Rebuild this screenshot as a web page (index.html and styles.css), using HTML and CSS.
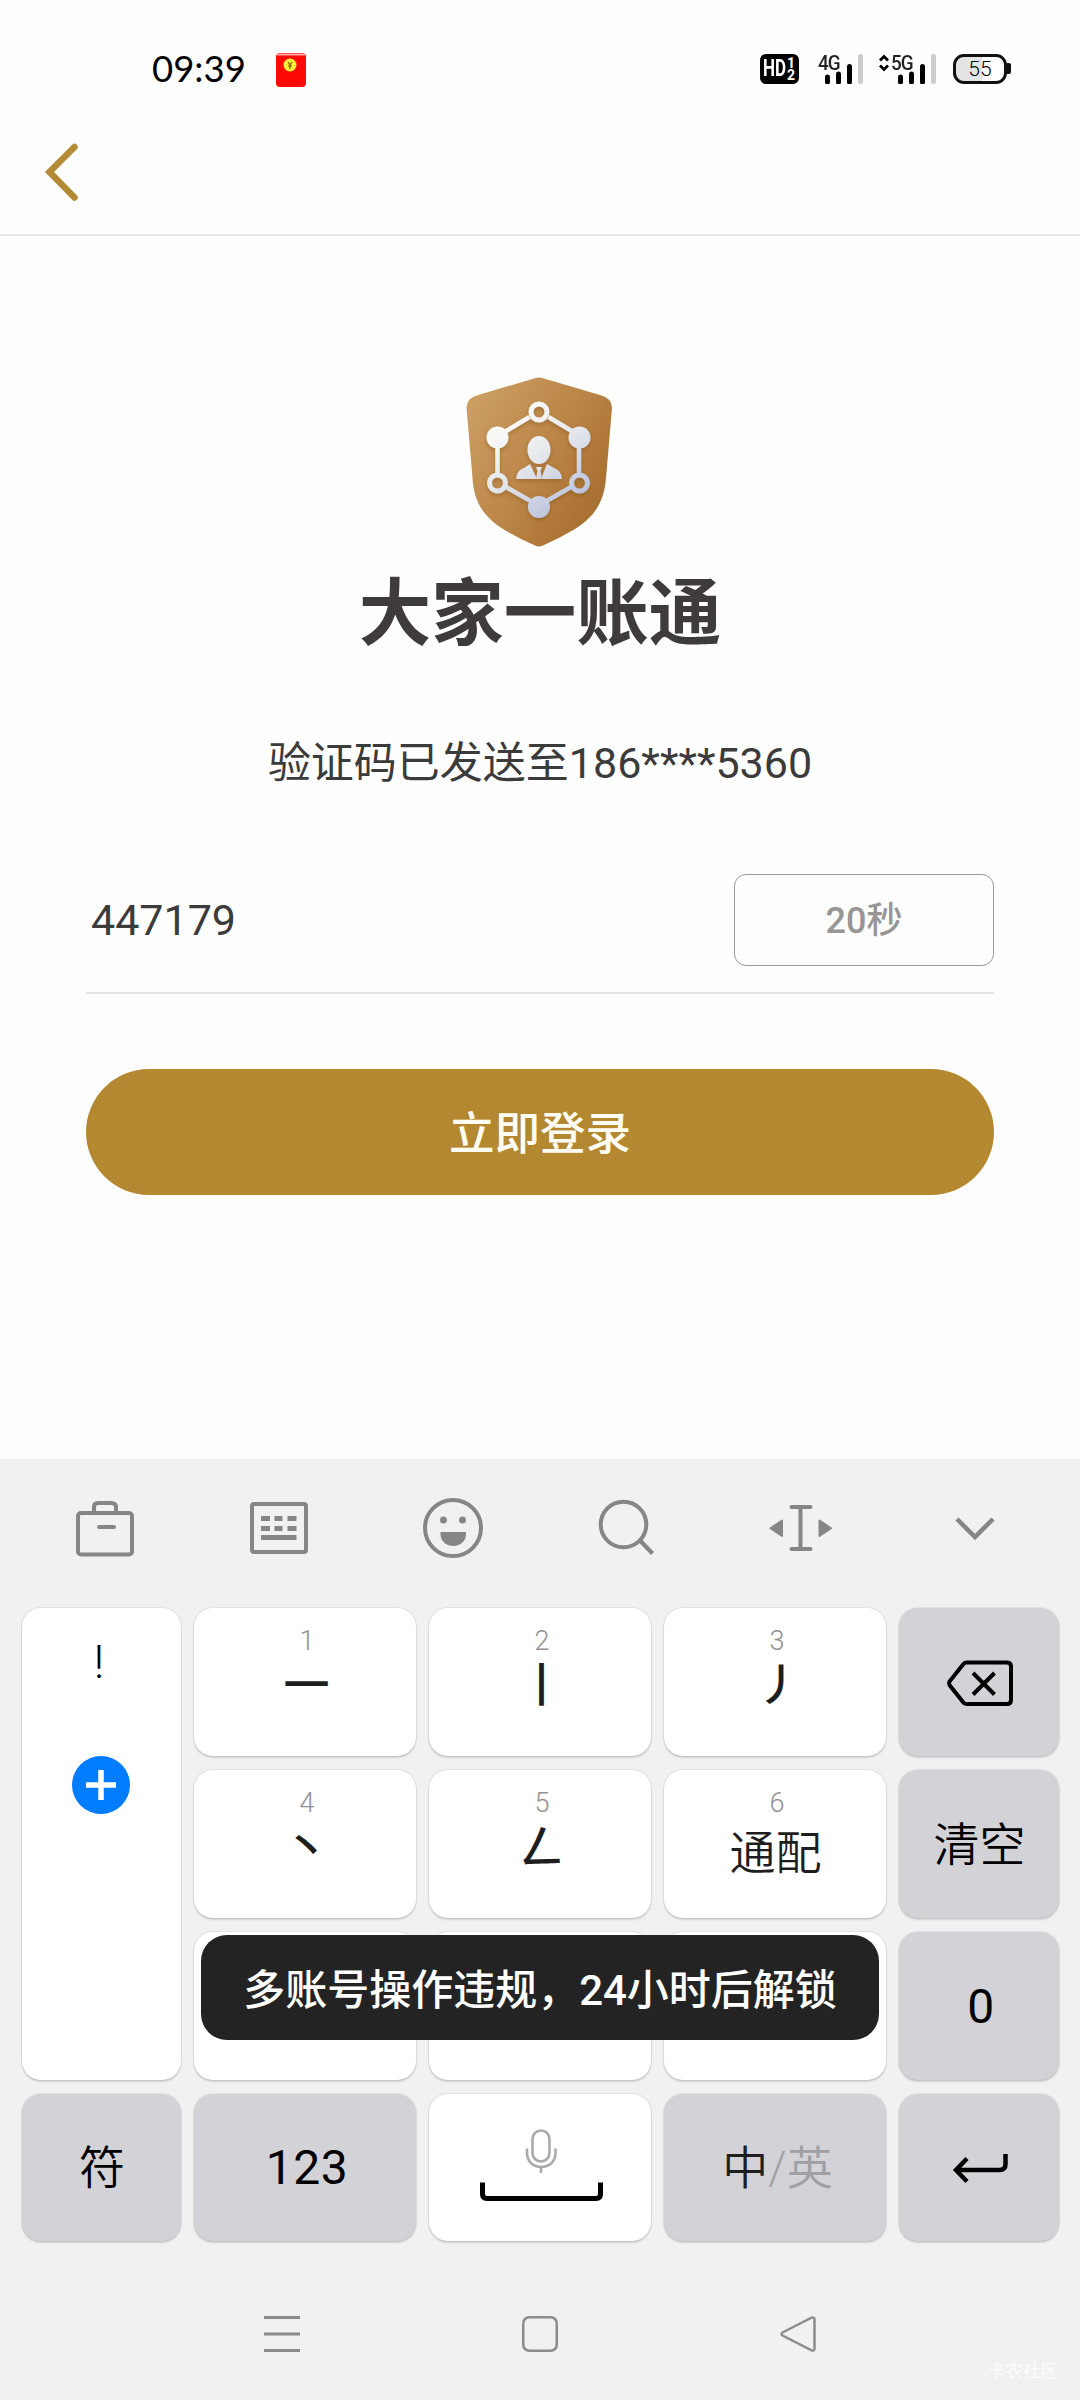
FILE: index.html
```html
<!DOCTYPE html>
<html lang="zh-CN">
<head>
<meta charset="utf-8">
<title>大家一账通</title>
<link rel="stylesheet" href="styles.css">
</head>
<body>
<div class="screen">
  <header class="status">
    <span class="clock">09:39</span>
    <svg class="packet" width="32" height="36" viewBox="0 0 32 36">
      <rect x="1" y="1" width="30" height="34" rx="4" fill="#fb0a06"/>
      <path d="M2 2.500H30" stroke="#f9a6a0" stroke-width="2"/>
      <circle cx="15" cy="13" r="6.500" fill="#fdf03a"/>
      <path d="M13 10l2 3 2-3M15 13v4M13 14h4" stroke="#7c5a00" stroke-width="1.200" fill="none"/>
    </svg>
    <div class="indicators">
      <div class="hd"><span class="hd-main">HD</span><span class="hd-sub"><i>1</i><i>2</i></span></div>
      <div class="signal s4">
        <span class="net">4G</span>
        <svg width="40" height="30" viewBox="0 0 40 30"><path d="M4.500 23v5M15.500 20v8M26.500 12.500v15.500" stroke="#000" stroke-width="5" stroke-linecap="round"/><path d="M37.500 2.500v25" stroke="#ccc" stroke-width="5" stroke-linecap="round"/></svg>
      </div>
      <svg class="updown" width="12" height="18" viewBox="0 0 12 18"><path d="M2 6.500l4-4 4 4M2 11.500l4 4 4-4" fill="none" stroke="#000" stroke-width="2.800"/></svg>
      <div class="signal s5">
        <span class="net">5G</span>
        <svg width="40" height="30" viewBox="0 0 40 30"><path d="M4.500 23v5M15.500 20v8M26.500 12.500v15.500" stroke="#000" stroke-width="5" stroke-linecap="round"/><path d="M37.500 2.500v25" stroke="#ccc" stroke-width="5" stroke-linecap="round"/></svg>
      </div>
      <div class="battery"><span>55</span></div><div class="nub"></div>
    </div>
  </header>
  <nav class="topbar">
    <svg width="36" height="64" viewBox="0 0 36 64"><path d="M31.500 7L6.500 32L31.500 57.500" fill="none" stroke="#b38a35" stroke-width="6.500" stroke-linecap="round" stroke-linejoin="miter"/></svg>
  </nav>
  <main class="login">
    <svg class="shield" width="146" height="170" viewBox="0 0 146 170">
      <defs>
        <linearGradient id="gold" x1="0" y1="0.150" x2="1" y2="0.850"><stop offset="0" stop-color="#cc9f63"/><stop offset="0.450" stop-color="#bd884a"/><stop offset="1" stop-color="#a36b2b"/></linearGradient>
        <linearGradient id="silver" gradientUnits="userSpaceOnUse" x1="25" y1="40" x2="95" y2="140"><stop offset="0" stop-color="#fffefa"/><stop offset="0.450" stop-color="#e8eaed"/><stop offset="1" stop-color="#b7c0db"/></linearGradient>
        <filter id="soft" x="-20%" y="-20%" width="140%" height="140%"><feDropShadow dx="0" dy="2" stdDeviation="2" flood-color="#7a4a12" flood-opacity="0.450"/></filter>
      </defs>
      <path d="M68 1.500Q73 -0.500 78 1.500L134 18Q146 21 146 31L140 101C138 130 123 143 109 152Q94 161 77 168.500Q73 170.500 69 168.500Q52 161 37 152C23 143 8 130 6.500 101L0.500 31Q0.500 21 12 18Z" fill="url(#gold)"/>
      <g filter="url(#soft)" stroke="url(#silver)" fill="none">
        <path d="M63.500 40L32 59M82.500 40L114 59M31.500 60.500V96M113 60.500V96M40 110L68 126M105 110L77 126" stroke-width="4.500"/>
        <circle cx="73" cy="35" r="8" stroke-width="5"/>
        <circle cx="31.500" cy="106" r="8" stroke-width="5"/>
        <circle cx="113.500" cy="106" r="8" stroke-width="5"/>
        <g fill="url(#silver)" stroke="none">
          <circle cx="31.500" cy="60.500" r="11"/><circle cx="113.500" cy="60.500" r="11"/><circle cx="73" cy="130" r="11"/>
          <ellipse cx="73" cy="73" rx="11.500" ry="14"/>
          <path d="M50 102Q51 93 58 91L64 87L71 102ZM96 102Q95 93 88 91L81 87L75 102ZM70 90h6l-1.500 4 1.500 8h-6l1.500-8z"/>
        </g>
      </g>
    </svg>
    <h1>大家一账通</h1>
    <p class="sent">验证码已发送至186****5360</p>
    <div class="code-row">
      <span class="code">447179</span>
      <button class="countdown">20秒</button>
    </div>
    <button class="submit">立即登录</button>
  </main>
  <section class="keyboard">
    <div class="tools">
      <svg width="64" height="64" viewBox="0 0 64 64"><g fill="none" stroke="#868686" stroke-width="4"><rect x="5" y="17" width="54" height="41.500" rx="3"/><path d="M21 17V11Q21 7 25 7H38Q43 7 43 11V17"/><path d="M26 31h15" stroke-linecap="round"/></g></svg>
      <svg width="64" height="64" viewBox="0 0 64 64"><rect x="5" y="8" width="54" height="48" rx="2" fill="none" stroke="#868686" stroke-width="4"/><path d="M14 22.500h9m4.500 0h8m5 0h9M14 32.500h9m4.500 0h8m5 0h9M14 41.500h35.500" stroke="#868686" stroke-width="5"/></svg>
      <svg width="64" height="64" viewBox="0 0 64 64"><circle cx="32" cy="32" r="28" fill="none" stroke="#868686" stroke-width="4"/><g fill="#868686"><circle cx="22.500" cy="24" r="3.500"/><circle cx="41.500" cy="24" r="3.500"/><path d="M19.500 36h25.500v2c0 16-25.500 16-25.500 0z"/></g></svg>
      <svg width="64" height="64" viewBox="0 0 64 64"><path d="M45 44.500L57.500 57.500" stroke="#868686" stroke-width="4.200"/><circle cx="28.500" cy="28.500" r="22.800" fill="none" stroke="#868686" stroke-width="4"/></svg>
      <svg width="64" height="64" viewBox="0 0 64 64"><path d="M32 11v42M23 11h19M23 53h19" transform="translate(-0.500 0)" stroke="#868686" stroke-width="4" stroke-linecap="round"/><path d="M13 24.500V40L1.500 32.250ZM50.500 24.500V40L62 32.250Z" fill="#868686" stroke="#868686" stroke-width="2" stroke-linejoin="round"/></svg>
      <svg width="64" height="64" viewBox="0 0 64 64"><path d="M14 23L32 41L50 23" fill="none" stroke="#868686" stroke-width="4.500"/></svg>
    </div>
    <div class="keys">
      <div class="key side">
        <span class="bang">!</span>
        <svg width="58" height="58" viewBox="0 0 58 58"><circle cx="29" cy="29" r="29" fill="#007cff"/><path d="M14 29h30M29 14v30" stroke="#fff" stroke-width="5.500"/></svg>
      </div>
      <div class="key"><small>1</small><b>一</b></div>
      <div class="key"><small>2</small><b>丨</b></div>
      <div class="key"><small>3</small><b class="sweep">㇓</b></div>
      <div class="key gray"><svg class="erase" width="70" height="50" viewBox="0 0 70 50"><g fill="none" stroke="#000" stroke-width="4"><path d="M21.500 4.500H62Q66 4.500 66 8.500V42Q66 46 62 46H21.500Q19.500 46 18 44L4.500 27Q3.500 25.300 4.500 23.500L18 6.500Q19.500 4.500 21.500 4.500Z"/><path d="M28 15L49.500 36.500M49.500 15L28 36.500"/></g></svg></div>
      <div class="key"><small>4</small><b>丶</b></div>
      <div class="key"><small>5</small><b>ㄥ</b></div>
      <div class="key"><small>6</small><b class="word">通配</b></div>
      <div class="key gray"><span>清空</span></div>
      <div class="key"></div>
      <div class="key"></div>
      <div class="key"></div>
      <div class="key gray num">0</div>
      <div class="key gray"><span>符</span></div>
      <div class="key gray num">123</div>
      <div class="key">
        <svg class="space" width="126" height="80" viewBox="0 0 126 80"><g fill="none" stroke="#aaa" stroke-width="2.600"><rect x="54.500" y="4.500" width="17" height="31" rx="8.500"/><path d="M49 22.500V27C49 45.500 77.500 45.500 77.500 27V22.500M63 41v6"/></g><path d="M4.500 56.500V68Q4.500 72.500 9 72.500H118Q122.500 72.500 122.500 68V56.500" fill="none" stroke="#000" stroke-width="5"/></svg>
      </div>
      <div class="key gray lang"><span>中<i>/英</i></span></div>
      <div class="key gray"><svg class="enter" width="60" height="36" viewBox="0 0 60 36"><path d="M55.500 3V13Q55.500 19 49.500 19H7M17 7.500L6 19L17 30.500" fill="none" stroke="#000" stroke-width="4.500"/></svg></div>
      <div class="toast">多账号操作违规，24小时后解锁</div>
    </div>
  </section>
  <footer class="nav">
    <svg width="42" height="42" viewBox="0 0 42 42"><path d="M3 4.500h36M3 21h36M3 37.500h36" stroke="#8c8c8c" stroke-width="3"/></svg>
    <svg width="42" height="42" viewBox="0 0 42 42"><rect x="4.250" y="4.250" width="33.500" height="33.500" rx="6" fill="none" stroke="#8c8c8c" stroke-width="2.500"/></svg>
    <svg width="42" height="42" viewBox="0 0 42 42"><path d="M5.500 19.500L35 4.500Q37.500 4 37.500 6.500V35.500Q37.500 38 35 37.500L5.500 22.500Q3.500 21 5.500 19.500Z" fill="none" stroke="#8c8c8c" stroke-width="2.500"/></svg>
    <span class="mark">卡农社区</span>
  </footer>
</div>
</body>
</html>
```
FILE: styles.css
```css
* { box-sizing: border-box; }
body { margin: 0; background: #fefefe; }
.screen {
  width: 1080px; height: 2400px; display: flex; flex-direction: column; overflow: hidden;
  font-family: Roboto, "Noto Sans CJK SC", sans-serif; color: #3c3b3c;
}
svg { display: block; flex: none; }
button { font: inherit; padding: 0; margin: 0; background: none; border: 0; }

.status { height: 138px; padding: 0 69px 0 152px; display: flex; align-items: center; }
.clock { font: 36.500px/46px Lato, sans-serif; color: #000; width: 123px; white-space: nowrap; margin-top: -2px; }
.packet { margin-top: 1px; }
.indicators { margin-left: auto; display: flex; height: 30px; }
.hd {
  width: 39px; height: 30px; border-radius: 6px; background: #000; color: #fff; margin-right: 19px;
  display: flex; align-items: center; padding-left: 3px; font: 700 23px/30px Roboto;
}
.hd-main { width: 24px; transform: scaleX(.74); transform-origin: 0 50%; }
.hd-sub { display: flex; flex-direction: column; font-size: 14px; line-height: 12px; }
.hd-sub i { font-style: normal; }
.signal { position: relative; width: 42px; }
.signal svg { margin-left: 5px; }
.net {
  position: absolute; left: 0; top: 0; font: 500 21px/19px Roboto; letter-spacing: -1px; color: #222;
  z-index: 1; transform: scaleX(.9); transform-origin: 0 50%;
}
.s4 { margin-right: 14px; width: 46px; }
.updown { margin-right: 1px; }
.s5 { margin-right: 22px; width: 40px; }
.battery {
  width: 54px; height: 30px; border: 3px solid #111; border-radius: 11px; text-align: center;
  font: 300 21px/24px Roboto; color: #000; background: linear-gradient(90deg, #e4e4e4 55%, #fff 55%);
}
.nub { width: 4px; height: 11px; background: #111; margin-top: 9px; border-radius: 0 2px 2px 0; }

.topbar { height: 98px; border-bottom: 2px solid #e6e6e6; padding: 2px 0 0 43px; }

.login { height: 1223px; padding: 141px 86px 0; display: flex; flex-direction: column; align-items: center; }
.shield { margin-left: -2px; }
h1 { margin: 24px 0 0; font-size: 72.500px; line-height: 88px; font-weight: 700; color: #3f3b3c; }
.sent { margin: 74px 0 0; font-size: 43px; line-height: 60px; white-space: nowrap; }
.code-row {
  align-self: stretch; margin-top: 81px; height: 120px; border-bottom: 2px solid #e5e5e5;
  display: flex; justify-content: space-between; padding-left: 5px;
}
.code { font-size: 43px; line-height: 92px; }
.countdown {
  width: 260px; height: 92px; border: 1.500px solid #999; border-radius: 12px; padding-bottom: 6px;
  font-size: 36px; font-weight: 500; color: #979596;
}
.submit {
  align-self: stretch; height: 126px; margin-top: 75px; border-radius: 63px; background: #b38831;
  color: #fffdf2; font-size: 45.500px; font-weight: 500; padding-bottom: 5px;
}

.keyboard { height: 801px; background: #f1f1f1; }
.tools { height: 149px; padding: 37px 73px 0 73px; display: flex; justify-content: space-between; }
.keys {
  position: relative; padding: 0 21px 0 22px; display: grid; gap: 14px 13px;
  grid-template-columns: 159px 222px 222px 222px 160px; grid-template-rows: 148px 148px 148px 147px;
}
.key {
  border-radius: 19px; background: #fff; box-shadow: 0 0 1px 1px rgba(0,0,0,.07), 0 2px 2px rgba(0,0,0,.13);
  display: flex; flex-direction: column; align-items: center;
  font-size: 46px; font-weight: 350; color: #1e1e1e;
}
.key small { margin: 19px 0 0 4px; font-size: 27px; line-height: 28px; color: #929292; }
.key b { font-size: 46px; line-height: 56px; height: 56px; font-weight: 500; margin: 2px 0 0 3px; }
.key b.sweep { margin-left: 8px; }
.key b.word { font-weight: 350; margin: 8px 0 0 1px; }
.key.side { grid-row: span 3; }
.key.side svg { margin-right: 1px; }
.bang { font-size: 46px; line-height: 54px; margin: 27px 5px 67px 0; color: #000; }
.key.gray { background: #d3d2d7; color: #000; justify-content: center; }
.key.gray span { margin: -7px 0 0 1px; }
.key.num { font-size: 48px; font-weight: 400; letter-spacing: .500px; padding-left: 4px; }
.key.lang { color: #1e1e1e; }
.key.gray.lang span { margin-left: 5px; }
.lang i { font-style: normal; color: #a0a0a4; }
.space { margin: 32px 0 0 2px; }
.erase { margin: 2px 0 0 2px; }
.enter { margin: 3px 0 0 2px; }
.toast {
  position: absolute; left: 201px; top: 327px; width: 678px; height: 105px; border-radius: 26px;
  background: #232323; color: #fff; text-align: center; font-size: 42px; line-height: 111px; font-weight: 500; white-space: nowrap;
}

.nav { position: relative; height: 140px; background: #f1f1f1; padding: 53px 261px 0; display: flex; justify-content: space-between; }
.mark { position: absolute; left: 988px; top: 97px; font: 17.500px/26px "Noto Sans CJK SC", sans-serif; color: #fcfcfc; }
```
